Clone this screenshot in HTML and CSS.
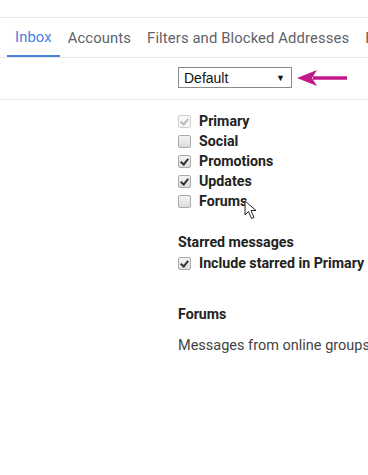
FILE: index.html
```html
<!DOCTYPE html>
<html>
<head>
<meta charset="utf-8">
<link rel="stylesheet" href="styles.css">
</head>
<body>
<div class="page">
  <div class="topline"></div>
  <nav class="tabs">
    <span class="tab active">Inbox</span>
    <span class="tab">Accounts</span>
    <span class="tab">Filters and Blocked Addresses</span>
    <span class="tab">F</span>
  </nav>
  <div class="row-select">
    <div class="select"><span>Default</span><span class="caret">▼</span></div>
    <svg class="arrow" width="54" height="18" viewBox="0 0 54 18">
      <path d="M52 9 H18" stroke="#c2188a" stroke-width="3.5" fill="none"/>
      <path d="M2 9 L22 1 L17 9 L22 17 Z" fill="#c2188a"/>
    </svg>
  </div>
  <div class="section">
    <ul class="checks">
      <li><span class="cb checked disabled"></span><b>Primary</b></li>
      <li><span class="cb"></span><b>Social</b></li>
      <li><span class="cb checked"></span><b>Promotions</b></li>
      <li><span class="cb checked"></span><b>Updates</b></li>
      <li class="pos"><span class="cb"></span><b>Forums</b>
        <svg class="cursor" width="14" height="20" viewBox="0 0 14 20">
          <path d="M1 1 L1 15 L4.5 11.5 L7.5 18.5 L10 17.5 L7 10.5 L12 10.5 Z" fill="#fff" stroke="#222" stroke-width="1" stroke-linejoin="round"/>
        </svg>
      </li>
    </ul>
    <h3 class="head starred">Starred messages</h3>
    <ul class="checks">
      <li><span class="cb checked"></span><b>Include starred in Primary</b></li>
    </ul>
    <h3 class="head forums">Forums</h3>
    <p class="desc">Messages from online groups</p>
  </div>
</div>
</body>
</html>
```
FILE: styles.css
```css
html, body { margin: 0; padding: 0; background: #fff; }
body { font-family: Roboto, "Liberation Sans", Arial, sans-serif; overflow: hidden; width: 368px; height: 475px; }
.page { padding-top: 17px; }
.topline { height: 1px; background: #ebebeb; }
.tabs {
  display: flex; white-space: nowrap; height: 39px; align-items: stretch;
  border-bottom: 1px solid #e6e6e6; padding-left: 7px; overflow: hidden;
}
.tab {
  font-size: 14.8px; color: #5f6368; padding: 0 8px; display: flex; align-items: center;
  letter-spacing: 0.12px; flex: none;
}
.tab.active { color: #4a80de; border-bottom: 3px solid #4a80de; margin-bottom: -1px; }
.row-select {
  display: flex; align-items: center; padding-left: 178px; height: 41px;
  border-bottom: 1px solid #e8e8e8;
}
.select {
  height: 19px; border: 1px solid #8a8a8a; display: flex; align-items: center;
  justify-content: space-between; padding: 0 6px 0 5px; box-sizing: content-box;
  font-family: "Liberation Sans", Arial, sans-serif; font-size: 14px; color: #111;
  width: 101px; margin-top: -2px;
}
.caret { font-size: 9px; color: #111; }
.arrow { margin-left: 3px; margin-top: -1px; }
.section { padding-left: 178px; padding-top: 11px; }
.checks { list-style: none; margin: 0; padding: 0; }
.checks li { height: 20px; display: flex; align-items: center; font-size: 14.2px; color: #222; }
.checks li b { font-weight: 700; margin-left: 8px; }
.pos { position: relative; }
.cursor { position: absolute; left: 66px; top: 9px; }
.cb {
  width: 11px; height: 11px; border: 1px solid #aaa; border-radius: 2px; background: linear-gradient(#f4f4f4, #dcdcdc);
  position: relative; flex: none;
}
.cb.checked::after {
  content: ""; position: absolute; left: 3px; top: 1px; width: 3px; height: 6px;
  border: solid #333; border-width: 0 2px 2px 0; transform: rotate(40deg);
}
.cb.disabled { border-color: #d0d0d0; background: #f7f7f7; }
.cb.disabled::after { border-color: #bbb; }
.head { font-size: 14.2px; font-weight: 700; color: #222; margin: 0; }
.starred { margin-top: 20px; height: 22px; line-height: 22px; }
.forums { margin-top: 30px; height: 22px; line-height: 22px; }
.desc { margin: 12px 0 0; font-size: 14.5px; color: #444; white-space: nowrap; }
```
